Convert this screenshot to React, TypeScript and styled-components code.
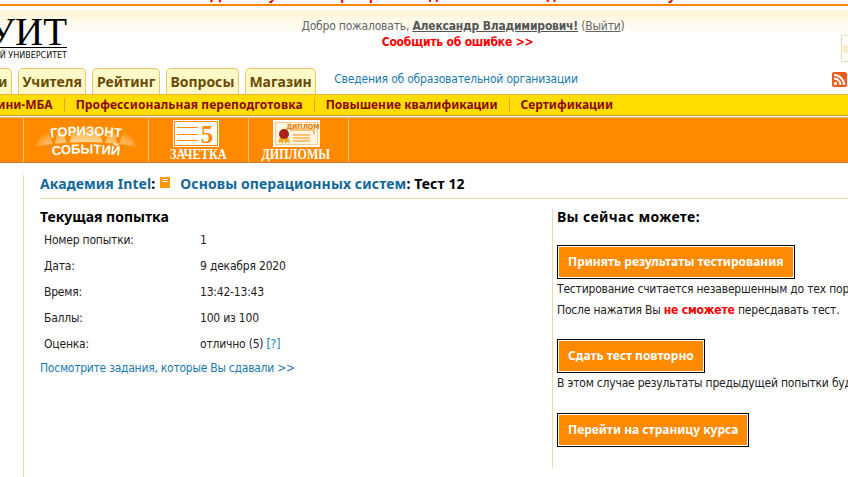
import React from "react";
import styled, { createGlobalStyle } from "styled-components";

const Global = createGlobalStyle`
  html, body { margin: 0; padding: 0; background: #fff; overflow: hidden; }
  body { font-family: "DejaVu Sans", "Noto Sans", sans-serif; font-stretch: condensed; font-size: 12px; letter-spacing: -0.2px; color: #222; }
`;
const Page = styled.div`
  width: 848px; height: 477px; overflow: hidden; position: relative;
  display: flex; flex-direction: column;
`;
const Notice = styled.div`
  height: 4px; flex: none; overflow: hidden; text-align: center; color: #f00;
  font-family: "Noto Sans", sans-serif; font-stretch: normal; letter-spacing: 0;
  font-weight: 700; font-size: 14px; line-height: 14px; white-space: nowrap;
  span { display: block; margin-top: -12px; }
`;
const TopRule = styled.div`height: 2px; background: #ff8400; flex: none;`;
const Header = styled.header`
  margin-top: 4px; height: 58px; flex: none; display: flex;
  background: linear-gradient(#fdf3d3 0, #fffbee 14px, #fff 26px);
  position: relative;
`;
const Logo = styled.div`
  width: 67px; flex: none; overflow: hidden; display: flex; flex-direction: column; align-items: flex-end;
`;
const LogoMark = styled.div`
  font-family: "Liberation Serif", serif; font-stretch: normal; letter-spacing: 0; font-size: 39px; line-height: 40px; height: 35px; margin-top: 2px;
  color: #000; white-space: nowrap; border-bottom: 1px solid #000; display: flex; justify-content: flex-end; flex: none;
`;
const LogoSub = styled.div`
  font-family: "DejaVu Sans", sans-serif; font-stretch: normal; letter-spacing: 0; font-size: 8px; line-height: 10px; margin-top: 3px; color: #111; white-space: nowrap; flex: none;
`;
const Welcome = styled.div`
  flex: 1; display: flex; flex-direction: column; align-items: center; padding: 8px 0 0 0;
  color: #666; line-height: 16px;
  b { color: #555; font-weight: 700; text-decoration: underline; }
  a { color: #666; text-decoration: underline; }
`;
const Greeting = styled.div`margin-left: 11px;`;
const Report = styled.div`
  color: #f00; font-weight: 700; font-size: 12px;
`;
const SearchBox = styled.div`
  position: absolute; right: -10px; top: 25px; width: 15px; height: 25px; border: 1px solid #eedcae; background: #fff;
  &::after { content: ""; position: absolute; left: 1px; top: 9px; width: 5px; height: 8px; background: #fbeecb; }
`;
const TabRow = styled.div`
  height: 26px; flex: none; display: flex; align-items: flex-end; margin-left: -60px; gap: 6px; position: relative;
`;
const Tab = styled.div`
  height: 26px; box-sizing: border-box; padding: 3px 3.5px 0; background: #fffbc8; border: 1px solid #eec56c; border-bottom: 0;
  border-radius: 5px 5px 0 0; font-weight: 700; font-size: 14px; line-height: 19px; color: #6b4a05; white-space: nowrap;
  font-family: "Noto Sans", sans-serif; font-stretch: normal; letter-spacing: 0;
  &:first-child { width: 72px; text-align: right; }
`;
const InfoLink = styled.a`
  color: #1a7ab0; margin-left: 12px; align-self: flex-start; line-height: 16px; margin-top: 3px;
`;
const Rss = styled.svg`
  position: absolute; right: 1px; top: 4px; width: 15px; height: 15px;
`;
const YellowNav = styled.nav`
  height: 20px; flex: none; background: #ffdd00; border-top: 1px solid #e9b04a; border-bottom: 1px solid #d49a3a;
  display: flex; align-items: center; overflow: hidden; white-space: nowrap;
  color: #8a0a0a; font-weight: 700; font-size: 12px; font-family: "Noto Sans", sans-serif; font-stretch: normal; letter-spacing: 0;
`;
const YellowItem = styled.div`
  padding: 0 11px; line-height: 14px; border-right: 1px solid #dba72e;
  &:first-child { margin-left: -25px; }
  &:nth-child(2) { letter-spacing: 0.1px; }
  &:last-child { border-right: 0; }
`;
const OrangeBand = styled.div`
  margin-top: 1px; height: 44px; flex: none; background: #ff8a00; display: flex;
  border-top: 1px solid #f6b46a; border-bottom: 1px solid #d9742a;
`;
const BandCell = styled.div<{ $w: number; $shift?: number }>`
  width: ${(p) => p.$w}px; flex: none; box-sizing: border-box; border-right: 1px solid #fbc48a;
  padding-right: ${(p) => p.$shift ?? 0}px;
  display: flex; flex-direction: column; align-items: center; position: relative; overflow: hidden;
`;
const BandIcon = styled.svg<{ $nudge?: number }>`
  margin: 2px ${(p) => p.$nudge ?? 0}px 0 0; flex: none; display: block;
`;
const BandLabel = styled.div<{ $squeeze: number }>`
  font-family: "Liberation Serif", serif; font-stretch: normal; letter-spacing: 0; font-weight: 700; color: #fff; font-size: 14px; line-height: 14px; margin-top: 1px;
  transform: scaleX(${(p) => p.$squeeze}); white-space: nowrap;
`;
const Body = styled.main`
  margin: 12px 0 0 23px; flex: none; height: 305px; border-left: 1px solid #ecd9a7; padding-left: 16px; display: flex; flex-direction: column;
  width: 900px;
`;
const Crumbs = styled.h1`
  margin: 0; font-size: 14px; line-height: 17px; font-weight: 700; color: #000; padding-bottom: 6px; border-bottom: 1px solid #ecd9a7; white-space: nowrap;
  display: flex; align-items: center; font-family: "Noto Sans", sans-serif; font-stretch: normal; letter-spacing: 0.1px;
  a { color: #11689e; }
`;
const BookIcon = styled.svg`width: 10px; height: 11px; margin: -3px 10px 0 5px; flex: none;`;
const Columns = styled.div`display: flex; flex: 1;`;
const Left = styled.section`width: 512px; flex: none; padding-top: 8px;`;
const H2 = styled.h2`margin: 0; font-size: 14px; line-height: 20px; font-weight: 700; color: #000; font-family: "Noto Sans", sans-serif; font-stretch: normal; letter-spacing: 0;`;
const RightTitle = styled(H2)`letter-spacing: 0.35px; margin-top: -2px;`;
const Facts = styled.dl`
  margin: 5px 0 0 4px; display: grid; grid-template-columns: 156px 1fr; grid-auto-rows: 26px;
`;
const Term = styled.dt`margin: 0; line-height: 16px; color: #222;`;
const Val = styled.dd`margin: 0; line-height: 16px; color: #222; a { color: #1a7ab0; }`;
const Review = styled.a`color: #1a7ab0; display: block; margin-top: -2px; line-height: 16px; letter-spacing: -0.25px;`;
const Right = styled.section`
  border-left: 1px solid #ecd9a7; padding: 0 0 0 4px; flex: 1; margin-top: 10px; height: 259px; white-space: nowrap; box-sizing: border-box;
`;
const Action = styled.div<{ $gap: number }>`
  width: fit-content; box-sizing: border-box; background: #ff8a00; color: #fff; font-weight: 700; font-size: 12px; line-height: 16px;
  border: 1px solid #000; box-shadow: inset 0 0 0 1px #fff; padding: 8px 10px; margin-top: ${(p) => p.$gap}px;
  font-family: "Noto Sans", sans-serif; font-stretch: normal; letter-spacing: 0;
`;
const Note = styled.p`margin: 0; line-height: 21px; color: #222; b { color: #f00; }`;

function HorizonLogo() {
  return (
    <svg width="124" height="44" viewBox="0 0 124 44">
      <defs>
        <radialGradient id="glow" cx="0.5" cy="0.85" r="0.6">
          <stop offset="0" stopColor="#fff3c8" stopOpacity="0.95" />
          <stop offset="0.7" stopColor="#ffd591" stopOpacity="0.5" />
          <stop offset="1" stopColor="#ff8a00" stopOpacity="0" />
        </radialGradient>
        <clipPath id="arc"><path d="M0 0H124V31Q62 17 0 31Z" /></clipPath>
        <path id="topArc" d="M24 20Q62 15 100 20" />
        <path id="lowArc" d="M25 38Q62 33 99 38" />
      </defs>
      <g clipPath="url(#arc)">
        <path d="M10 32L22 6 30 30 36 2 44 30 52 0H72L80 30 88 2 94 30 102 6 114 32Z" fill="url(#glow)" />
      </g>
      <g fill="#fff" fontFamily="Liberation Sans, sans-serif" fontWeight="700" fontSize="13" textAnchor="middle" style={{ fontStretch: "normal", letterSpacing: 0 }}>
        <text><textPath href="#topArc" startOffset="50%">ГОРИЗОНТ</textPath></text>
        <text><textPath href="#lowArc" startOffset="50%">СОБЫТИЙ</textPath></text>
      </g>
    </svg>
  );
}

export default function App() {
  return (
    <Page>
      <Global />
      <Notice><span>Внимание! Для получения сертификата сдайте все тесты до окончания обучения</span></Notice>
      <TopRule />
      <Header>
        <Logo>
          <LogoMark>ИНТУИТ</LogoMark>
          <LogoSub>НАЦИОНАЛЬНЫЙ ОТКРЫТЫЙ УНИВЕРСИТЕТ</LogoSub>
        </Logo>
        <Welcome>
          <Greeting>Добро пожаловать, <b>Александр Владимирович!</b> (<a>Выйти</a>)</Greeting>
          <Report>Сообщить об ошибке &gt;&gt;</Report>
        </Welcome>
        <SearchBox />
      </Header>
      <TabRow>
        <Tab>Новости</Tab>
        <Tab>Учителя</Tab>
        <Tab>Рейтинг</Tab>
        <Tab>Вопросы</Tab>
        <Tab>Магазин</Tab>
        <InfoLink>Сведения об образовательной организации</InfoLink>
        <Rss viewBox="0 0 15 15">
          <rect x="0" y="0" width="15" height="15" rx="2" fill="#ee5a1c" />
          <circle cx="3.5" cy="11.5" r="1.7" fill="#fff" />
          <path d="M2 6.500a6.500 6.500 0 0 1 6.500 6.500M2 3a10 10 0 0 1 10 10" stroke="#fff" strokeWidth="2" fill="none" />
        </Rss>
      </TabRow>
      <YellowNav>
        <YellowItem>Мини-МБА</YellowItem>
        <YellowItem>Профессиональная переподготовка</YellowItem>
        <YellowItem>Повышение квалификации</YellowItem>
        <YellowItem>Сертификации</YellowItem>
      </YellowNav>
      <OrangeBand>
        <BandCell $w={24} />
        <BandCell $w={125}><HorizonLogo /></BandCell>
        <BandCell $w={100}>
          <BandIcon $nudge={5} width="46" height="27" viewBox="0 0 46 27">
            <rect width="46" height="27" fill="#fff" />
            <rect x="1.500" y="1.500" width="43" height="24" fill="#fff" stroke="#ff8a00" />
            <path d="M4 7.500h21M4 14.500h21M4 20.500h21" stroke="#ff8a00" />
            <text x="34" y="23" fontFamily="Liberation Serif, serif" fontWeight="700" fontSize="25" fill="#ff8a00" textAnchor="middle" style={{ fontStretch: "normal" }}>5</text>
          </BandIcon>
          <BandLabel $squeeze={0.88}>ЗАЧЕТКА</BandLabel>
        </BandCell>
        <BandCell $w={100} $shift={5}>
          <BandIcon width="47" height="27" viewBox="0 0 47 27">
            <rect width="47" height="27" fill="#fff" />
            <rect x="2.500" y="2.500" width="42" height="22" fill="#fff6e2" stroke="#ff9a20" strokeDasharray="1 1" />
            <path d="M7 17l-2 6 3-1 2 2 1-6zM15 17l2 6-3-1-2 2-1-6z" fill="#f2a516" />
            <circle cx="11" cy="14" r="5" fill="#a8221a" />
            <path d="M17 10h24v4M20 15h17M20 18h17M20 21h17" stroke="#ff8a00" fill="none" />
            <text x="30" y="8.500" fontFamily="DejaVu Sans, sans-serif" fontWeight="700" fontSize="7" fill="#e57800" textAnchor="middle" style={{ fontStretch: "condensed", letterSpacing: 0 }}>ДИПЛОМ</text>
          </BandIcon>
          <BandLabel $squeeze={0.86}>ДИПЛОМЫ</BandLabel>
        </BandCell>
      </OrangeBand>
      <Body>
        <Crumbs>
          <a>Академия Intel</a>:
          <BookIcon viewBox="0 0 10 11">
            <rect width="10" height="11" fill="#f90" />
            <path d="M2.500 2.500h5M2.500 4.500h5" stroke="#fff" />
          </BookIcon>
          <a>Основы операционных систем</a>: Тест 12
        </Crumbs>
        <Columns>
          <Left>
            <H2>Текущая попытка</H2>
            <Facts>
              <Term>Номер попытки:</Term><Val>1</Val>
              <Term>Дата:</Term><Val>9 декабря 2020</Val>
              <Term>Время:</Term><Val>13:42-13:43</Val>
              <Term>Баллы:</Term><Val>100 из 100</Val>
              <Term>Оценка:</Term><Val>отлично (5) <a>[?]</a></Val>
            </Facts>
            <Review>Посмотрите задания, которые Вы сдавали &gt;&gt;</Review>
          </Left>
          <Right>
            <RightTitle>Вы сейчас можете:</RightTitle>
            <Action $gap={18}>Принять результаты тестирования</Action>
            <Note>Тестирование считается незавершенным до тех пор, пока Вы не примете его результаты.</Note>
            <Note>После нажатия Вы <b>не сможете</b> пересдавать тест.</Note>
            <Action $gap={18}>Сдать тест повторно</Action>
            <Note>В этом случае результаты предыдущей попытки будут аннулированы.</Note>
            <Action $gap={19}>Перейти на страницу курса</Action>
          </Right>
        </Columns>
      </Body>
    </Page>
  );
}
